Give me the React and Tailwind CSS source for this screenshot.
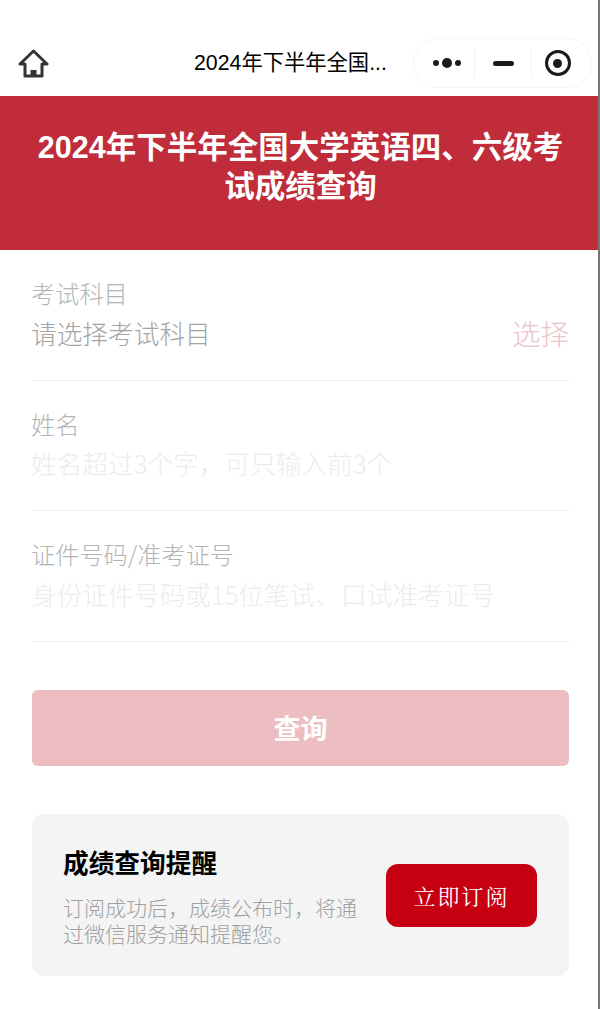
const cjk = "font-['Liberation_Sans','Noto_Sans_CJK_SC',sans-serif]";
const thin = "font-['Noto_Sans_CJK_SC',sans-serif] font-light";

function Field({ label, placeholder, muted, action }) {
  return (
    <div className="h-[130.5px] flex flex-col pt-[25px] border-b border-[#ececec]">
      <div className={`-ml-px text-[24.2px] leading-[36px] text-[#b4b4b4] ${thin}`}>{label}</div>
      <div className="flex justify-between items-center h-[44px]">
        <span className={`-ml-px text-[25.7px] ${thin} ${muted ? "text-[#a4a4a4]" : "text-[#ececec]"}`}>{placeholder}</span>
        {action && <span className={`text-[28.5px] text-[#ebc4c9] ${thin}`}>{action}</span>}
      </div>
    </div>
  );
}

export default function App() {
  return (
    <div className={`h-[1009px] bg-white border-r-2 border-[#777777] overflow-hidden ${cjk}`}>
      <div className="h-[96px] pt-[38px] pl-[18px] flex items-start">
        <svg className="mt-[11px] shrink-0" width="31" height="29" viewBox="0 0 31 29" fill="none" stroke="#333333" strokeWidth="3" strokeLinejoin="round">
          <path d="M15.5 2 L29 15 H24 V27 H7 V15 H2 Z" />
          <path d="M12.5 27 V21 H18.5 V27" fill="#333333" stroke="none" />
        </svg>
        <div className="ml-[145px] mt-[7px] w-[192px] text-[21.3px] leading-[36px] text-black whitespace-nowrap">2024年下半年全国...</div>
        <div className="ml-[27px] w-[179px] h-[50px] rounded-full border border-[#f5f5f5] flex items-center">
          <div className="w-[60px] flex items-center justify-center gap-[3px] pl-[5px]">
            <span className="w-[6px] h-[6px] rounded-full bg-[#1a1a1a]" />
            <span className="w-[10px] h-[10px] rounded-full bg-[#1a1a1a]" />
            <span className="w-[6px] h-[6px] rounded-full bg-[#1a1a1a]" />
          </div>
          <div className="w-px h-[30px] bg-[#f2f2f2]" />
          <div className="w-[56px] flex justify-center">
            <span className="w-[21px] h-[5px] rounded-full bg-[#1a1a1a]" />
          </div>
          <div className="w-px h-[30px] bg-[#f2f2f2]" />
          <div className="flex-1 flex justify-center pr-[8px]">
            <span className="w-[26px] h-[26px] rounded-full border-[3px] border-[#1a1a1a] flex items-center justify-center">
              <span className="w-[9px] h-[9px] rounded-full bg-[#1a1a1a]" />
            </span>
          </div>
        </div>
      </div>

      <div className="h-[154px] bg-[#c02c3a] pl-[33px] pr-[30px] pt-[32px] text-center text-white text-[30.5px] leading-[39px] font-bold">
        2024年下半年全国大学英语四、六级考试成绩查询
      </div>

      <div className="px-[32px] pr-[29px]">
        <Field label="考试科目" placeholder="请选择考试科目" muted action="选择" />
        <Field label="姓名" placeholder={"姓名超过3个字\uFF0C可只输入前3个"} />
        <Field label="证件号码/准考证号" placeholder="身份证件号码或15位笔试、口试准考证号" />

        <button className="mt-[48.5px] w-full h-[76px] rounded-[6px] bg-[#ecbec2] text-white text-[27px] leading-[40px] font-bold pt-[4px]">
          查询
        </button>

        <div className="mt-[48px] h-[162px] rounded-[12px] bg-[#f4f4f5] pl-[31px] pr-[32px] flex items-center justify-between">
          <div className="w-[298px] pt-[6px]">
            <div className="text-[25.7px] leading-[36px] font-bold text-black -mt-[5px]">成绩查询提醒</div>
            <div className={`mt-[12px] text-[21px] leading-[26px] text-[#a0a0a0] ${thin}`}>
              {"订阅成功后\uFF0C成绩公布时\uFF0C将通过微信服务通知提醒您。"}
            </div>
          </div>
          <button className="w-[151px] h-[63px] rounded-[12px] bg-[#c60012] text-white text-[22px] tracking-[2px] font-['Noto_Serif_CJK_SC','Noto_Sans_CJK_SC',serif]">
            立即订阅
          </button>
        </div>
      </div>
    </div>
  );
}
